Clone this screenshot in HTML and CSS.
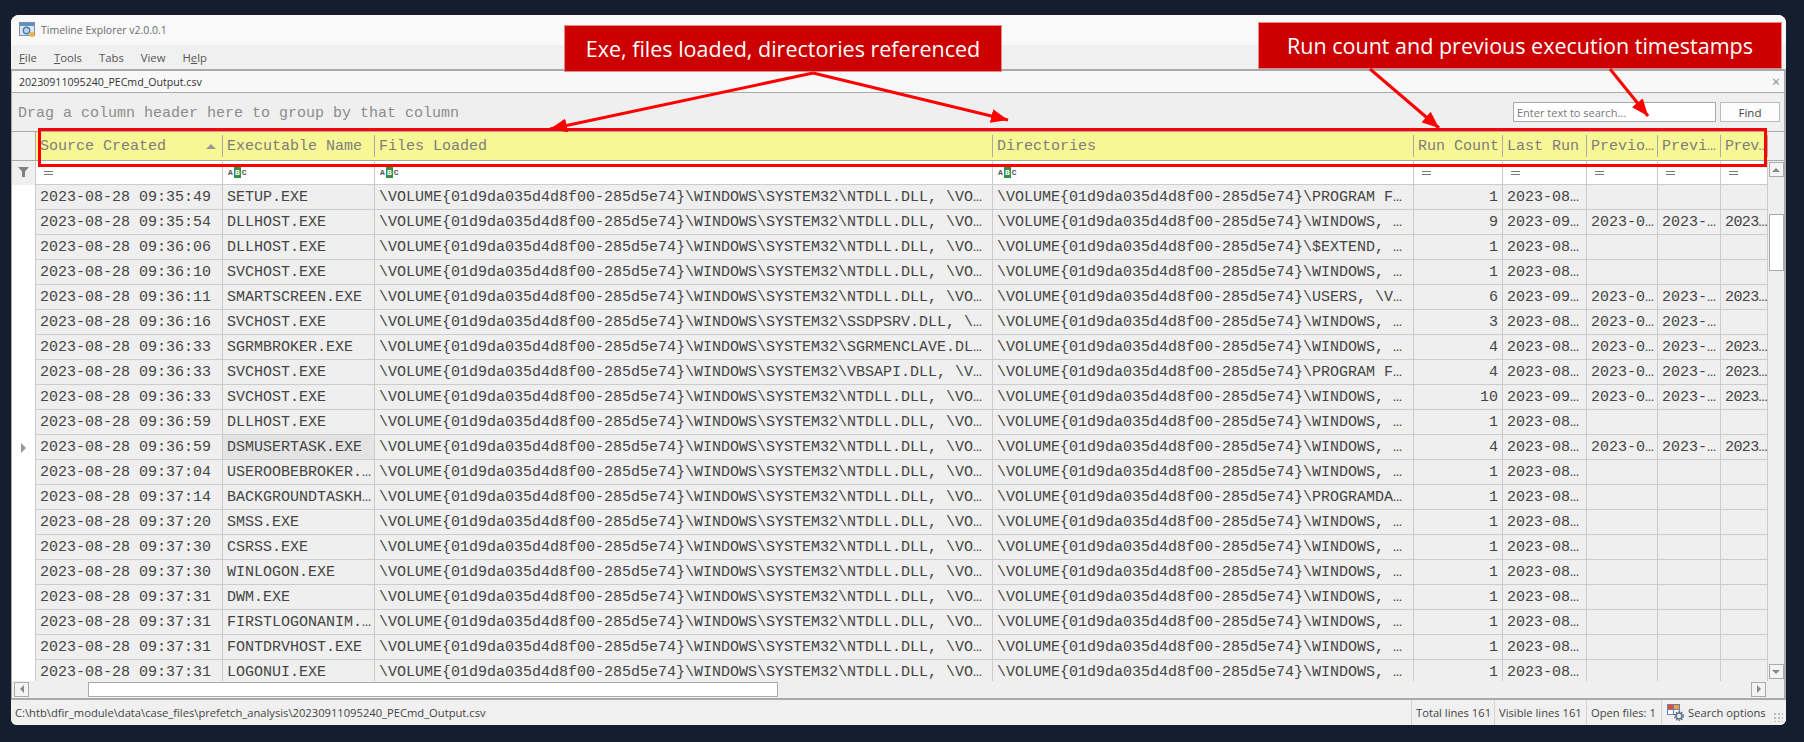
FILE: index.html
```html
<!DOCTYPE html>
<html lang="en">
<head>
    <meta charset="UTF-8">
    <title>Timeline Explorer v2.0.0.1</title>
    <link rel="stylesheet" href="styles.css">
</head>
<body>
    <div class="window">
        <div class="titlebar">
            <svg class="app-icon" width="17" height="16" viewBox="0 0 17 16">
                <rect x="0.5" y="0.5" width="15" height="13" fill="#dfe6ee" stroke="#7d8fa5"/>
                <rect x="1" y="1" width="14" height="3" fill="#5b93c7"/>
                <circle cx="7.5" cy="8.5" r="3.2" fill="#bcd6ee" stroke="#4d7ea8" stroke-width="1.4"/>
                <circle cx="13" cy="12.5" r="2.5" fill="#f2b33d"/>
            </svg>
            <span>Timeline Explorer v2.0.0.1</span>
        </div>
        <div class="menubar">
            <span><u>F</u>ile</span>
            <span><u>T</u>ools</span>
            <span>Tabs</span>
            <span>View</span>
            <span>H<u>e</u>lp</span>
        </div>
        <div class="workspace">
            <div class="tabbar">
                <span>20230911095240_PECmd_Output.csv</span>
                <span class="close">×</span>
            </div>
            <div class="groupbar">
                <span class="group-hint">Drag a column header here to group by that column</span>
                <input class="search" type="text" placeholder="Enter text to search...">
                <button class="find">Find</button>
            </div>
            <div class="row head">
                <div class="corner"></div>
                <div class="hcell sorted">Source Created<i class="sort"></i></div>
                <div class="hcell">Executable Name</div>
                <div class="hcell">Files Loaded</div>
                <div class="hcell">Directories</div>
                <div class="hcell">Run Count</div>
                <div class="hcell">Last Run</div>
                <div class="hcell">Previo…</div>
                <div class="hcell">Previ…</div>
                <div class="hcell">Prev…</div>
            </div>
            <div class="grid">
                <div class="rows">
                    <div class="row filter">
                        <div class="ind">
                            <svg width="11" height="10" viewBox="0 0 11 10"><path d="M0 0h11L7 4.5V10H4V4.5z" fill="#808080"/></svg>
                        </div>
                        <div class="fcell"><i class="eq"></i></div>
                        <div class="fcell"><span class="abc">A<b>B</b>C</span></div>
                        <div class="fcell"><span class="abc">A<b>B</b>C</span></div>
                        <div class="fcell"><span class="abc">A<b>B</b>C</span></div>
                        <div class="fcell"><i class="eq"></i></div>
                        <div class="fcell"><i class="eq"></i></div>
                        <div class="fcell"><i class="eq"></i></div>
                        <div class="fcell"><i class="eq"></i></div>
                        <div class="fcell"><i class="eq"></i></div>
                    </div>
                    <div class="data">
                        <div class="row"><div class="ind"></div><div class="cell">2023-08-28 09:35:49</div><div class="cell">SETUP.EXE</div><div class="cell">\VOLUME{01d9da035d4d8f00-285d5e74}\WINDOWS\SYSTEM32\NTDLL.DLL, \VO…</div><div class="cell">\VOLUME{01d9da035d4d8f00-285d5e74}\PROGRAM F…</div><div class="cell num">1</div><div class="cell">2023-08…</div><div class="cell"></div><div class="cell"></div><div class="cell"></div></div>
                        <div class="row"><div class="ind"></div><div class="cell">2023-08-28 09:35:54</div><div class="cell">DLLHOST.EXE</div><div class="cell">\VOLUME{01d9da035d4d8f00-285d5e74}\WINDOWS\SYSTEM32\NTDLL.DLL, \VO…</div><div class="cell">\VOLUME{01d9da035d4d8f00-285d5e74}\WINDOWS, …</div><div class="cell num">9</div><div class="cell">2023-09…</div><div class="cell">2023-0…</div><div class="cell">2023-…</div><div class="cell">2023…</div></div>
                        <div class="row"><div class="ind"></div><div class="cell">2023-08-28 09:36:06</div><div class="cell">DLLHOST.EXE</div><div class="cell">\VOLUME{01d9da035d4d8f00-285d5e74}\WINDOWS\SYSTEM32\NTDLL.DLL, \VO…</div><div class="cell">\VOLUME{01d9da035d4d8f00-285d5e74}\$EXTEND, …</div><div class="cell num">1</div><div class="cell">2023-08…</div><div class="cell"></div><div class="cell"></div><div class="cell"></div></div>
                        <div class="row"><div class="ind"></div><div class="cell">2023-08-28 09:36:10</div><div class="cell">SVCHOST.EXE</div><div class="cell">\VOLUME{01d9da035d4d8f00-285d5e74}\WINDOWS\SYSTEM32\NTDLL.DLL, \VO…</div><div class="cell">\VOLUME{01d9da035d4d8f00-285d5e74}\WINDOWS, …</div><div class="cell num">1</div><div class="cell">2023-08…</div><div class="cell"></div><div class="cell"></div><div class="cell"></div></div>
                        <div class="row"><div class="ind"></div><div class="cell">2023-08-28 09:36:11</div><div class="cell">SMARTSCREEN.EXE</div><div class="cell">\VOLUME{01d9da035d4d8f00-285d5e74}\WINDOWS\SYSTEM32\NTDLL.DLL, \VO…</div><div class="cell">\VOLUME{01d9da035d4d8f00-285d5e74}\USERS, \V…</div><div class="cell num">6</div><div class="cell">2023-09…</div><div class="cell">2023-0…</div><div class="cell">2023-…</div><div class="cell">2023…</div></div>
                        <div class="row"><div class="ind"></div><div class="cell">2023-08-28 09:36:16</div><div class="cell">SVCHOST.EXE</div><div class="cell">\VOLUME{01d9da035d4d8f00-285d5e74}\WINDOWS\SYSTEM32\SSDPSRV.DLL, \…</div><div class="cell">\VOLUME{01d9da035d4d8f00-285d5e74}\WINDOWS, …</div><div class="cell num">3</div><div class="cell">2023-08…</div><div class="cell">2023-0…</div><div class="cell">2023-…</div><div class="cell"></div></div>
                        <div class="row"><div class="ind"></div><div class="cell">2023-08-28 09:36:33</div><div class="cell">SGRMBROKER.EXE</div><div class="cell">\VOLUME{01d9da035d4d8f00-285d5e74}\WINDOWS\SYSTEM32\SGRMENCLAVE.DL…</div><div class="cell">\VOLUME{01d9da035d4d8f00-285d5e74}\WINDOWS, …</div><div class="cell num">4</div><div class="cell">2023-08…</div><div class="cell">2023-0…</div><div class="cell">2023-…</div><div class="cell">2023…</div></div>
                        <div class="row"><div class="ind"></div><div class="cell">2023-08-28 09:36:33</div><div class="cell">SVCHOST.EXE</div><div class="cell">\VOLUME{01d9da035d4d8f00-285d5e74}\WINDOWS\SYSTEM32\VBSAPI.DLL, \V…</div><div class="cell">\VOLUME{01d9da035d4d8f00-285d5e74}\PROGRAM F…</div><div class="cell num">4</div><div class="cell">2023-08…</div><div class="cell">2023-0…</div><div class="cell">2023-…</div><div class="cell">2023…</div></div>
                        <div class="row"><div class="ind"></div><div class="cell">2023-08-28 09:36:33</div><div class="cell">SVCHOST.EXE</div><div class="cell">\VOLUME{01d9da035d4d8f00-285d5e74}\WINDOWS\SYSTEM32\NTDLL.DLL, \VO…</div><div class="cell">\VOLUME{01d9da035d4d8f00-285d5e74}\WINDOWS, …</div><div class="cell num">10</div><div class="cell">2023-09…</div><div class="cell">2023-0…</div><div class="cell">2023-…</div><div class="cell">2023…</div></div>
                        <div class="row"><div class="ind"></div><div class="cell">2023-08-28 09:36:59</div><div class="cell">DLLHOST.EXE</div><div class="cell">\VOLUME{01d9da035d4d8f00-285d5e74}\WINDOWS\SYSTEM32\NTDLL.DLL, \VO…</div><div class="cell">\VOLUME{01d9da035d4d8f00-285d5e74}\WINDOWS, …</div><div class="cell num">1</div><div class="cell">2023-08…</div><div class="cell"></div><div class="cell"></div><div class="cell"></div></div>
                        <div class="row"><div class="ind"><i class="current"></i></div><div class="cell">2023-08-28 09:36:59</div><div class="cell focused">DSMUSERTASK.EXE</div><div class="cell">\VOLUME{01d9da035d4d8f00-285d5e74}\WINDOWS\SYSTEM32\NTDLL.DLL, \VO…</div><div class="cell">\VOLUME{01d9da035d4d8f00-285d5e74}\WINDOWS, …</div><div class="cell num">4</div><div class="cell">2023-08…</div><div class="cell">2023-0…</div><div class="cell">2023-…</div><div class="cell">2023…</div></div>
                        <div class="row"><div class="ind"></div><div class="cell">2023-08-28 09:37:04</div><div class="cell">USEROOBEBROKER.…</div><div class="cell">\VOLUME{01d9da035d4d8f00-285d5e74}\WINDOWS\SYSTEM32\NTDLL.DLL, \VO…</div><div class="cell">\VOLUME{01d9da035d4d8f00-285d5e74}\WINDOWS, …</div><div class="cell num">1</div><div class="cell">2023-08…</div><div class="cell"></div><div class="cell"></div><div class="cell"></div></div>
                        <div class="row"><div class="ind"></div><div class="cell">2023-08-28 09:37:14</div><div class="cell">BACKGROUNDTASKH…</div><div class="cell">\VOLUME{01d9da035d4d8f00-285d5e74}\WINDOWS\SYSTEM32\NTDLL.DLL, \VO…</div><div class="cell">\VOLUME{01d9da035d4d8f00-285d5e74}\PROGRAMDA…</div><div class="cell num">1</div><div class="cell">2023-08…</div><div class="cell"></div><div class="cell"></div><div class="cell"></div></div>
                        <div class="row"><div class="ind"></div><div class="cell">2023-08-28 09:37:20</div><div class="cell">SMSS.EXE</div><div class="cell">\VOLUME{01d9da035d4d8f00-285d5e74}\WINDOWS\SYSTEM32\NTDLL.DLL, \VO…</div><div class="cell">\VOLUME{01d9da035d4d8f00-285d5e74}\WINDOWS, …</div><div class="cell num">1</div><div class="cell">2023-08…</div><div class="cell"></div><div class="cell"></div><div class="cell"></div></div>
                        <div class="row"><div class="ind"></div><div class="cell">2023-08-28 09:37:30</div><div class="cell">CSRSS.EXE</div><div class="cell">\VOLUME{01d9da035d4d8f00-285d5e74}\WINDOWS\SYSTEM32\NTDLL.DLL, \VO…</div><div class="cell">\VOLUME{01d9da035d4d8f00-285d5e74}\WINDOWS, …</div><div class="cell num">1</div><div class="cell">2023-08…</div><div class="cell"></div><div class="cell"></div><div class="cell"></div></div>
                        <div class="row"><div class="ind"></div><div class="cell">2023-08-28 09:37:30</div><div class="cell">WINLOGON.EXE</div><div class="cell">\VOLUME{01d9da035d4d8f00-285d5e74}\WINDOWS\SYSTEM32\NTDLL.DLL, \VO…</div><div class="cell">\VOLUME{01d9da035d4d8f00-285d5e74}\WINDOWS, …</div><div class="cell num">1</div><div class="cell">2023-08…</div><div class="cell"></div><div class="cell"></div><div class="cell"></div></div>
                        <div class="row"><div class="ind"></div><div class="cell">2023-08-28 09:37:31</div><div class="cell">DWM.EXE</div><div class="cell">\VOLUME{01d9da035d4d8f00-285d5e74}\WINDOWS\SYSTEM32\NTDLL.DLL, \VO…</div><div class="cell">\VOLUME{01d9da035d4d8f00-285d5e74}\WINDOWS, …</div><div class="cell num">1</div><div class="cell">2023-08…</div><div class="cell"></div><div class="cell"></div><div class="cell"></div></div>
                        <div class="row"><div class="ind"></div><div class="cell">2023-08-28 09:37:31</div><div class="cell">FIRSTLOGONANIM.…</div><div class="cell">\VOLUME{01d9da035d4d8f00-285d5e74}\WINDOWS\SYSTEM32\NTDLL.DLL, \VO…</div><div class="cell">\VOLUME{01d9da035d4d8f00-285d5e74}\WINDOWS, …</div><div class="cell num">1</div><div class="cell">2023-08…</div><div class="cell"></div><div class="cell"></div><div class="cell"></div></div>
                        <div class="row"><div class="ind"></div><div class="cell">2023-08-28 09:37:31</div><div class="cell">FONTDRVHOST.EXE</div><div class="cell">\VOLUME{01d9da035d4d8f00-285d5e74}\WINDOWS\SYSTEM32\NTDLL.DLL, \VO…</div><div class="cell">\VOLUME{01d9da035d4d8f00-285d5e74}\WINDOWS, …</div><div class="cell num">1</div><div class="cell">2023-08…</div><div class="cell"></div><div class="cell"></div><div class="cell"></div></div>
                        <div class="row"><div class="ind"></div><div class="cell">2023-08-28 09:37:31</div><div class="cell">LOGONUI.EXE</div><div class="cell">\VOLUME{01d9da035d4d8f00-285d5e74}\WINDOWS\SYSTEM32\NTDLL.DLL, \VO…</div><div class="cell">\VOLUME{01d9da035d4d8f00-285d5e74}\WINDOWS, …</div><div class="cell num">1</div><div class="cell">2023-08…</div><div class="cell"></div><div class="cell"></div><div class="cell"></div></div>
                    </div>
                </div>
                <div class="vscroll">
                    <div class="sbtn"><i class="tri up"></i></div>
                    <div class="vthumb"></div>
                    <div class="sbtn down"><i class="tri dn"></i></div>
                </div>
            </div>
            <div class="hscroll">
                <div class="sbtn"><i class="tri lf"></i></div>
                <div class="hthumb"></div>
                <div class="sbtn right"><i class="tri rt"></i></div>
            </div>
        </div>
        <div class="statusbar">
            <span class="path">C:\htb\dfir_module\data\case_files\prefetch_analysis\20230911095240_PECmd_Output.csv</span>
            <span class="stat total">Total lines 161</span>
            <span class="stat visible">Visible lines 161</span>
            <span class="stat files">Open files: 1</span>
            <span class="stat options">
                <svg width="17" height="17" viewBox="0 0 17 17">
                    <rect x="0.5" y="0.5" width="12" height="10" fill="#fff" stroke="#6d7fa8"/>
                    <rect x="1" y="1" width="5" height="4" fill="#e8493a"/>
                    <rect x="7" y="1" width="5" height="4" fill="#f0a33c"/>
                    <path d="M0.5 5.5h12M6.5 0.5v10" stroke="#6d7fa8" fill="none"/>
                    <circle cx="12" cy="12" r="3" fill="#e6e9ee" stroke="#5f6f85" stroke-width="1.6"/>
                    <circle cx="12" cy="12" r="4.4" fill="none" stroke="#5f6f85" stroke-width="1.2" stroke-dasharray="1.4 1.4"/>
                </svg>
                Search options
            </span>
            <i class="grip"></i>
        </div>
    </div>

    <!-- annotations drawn on top of the screenshot -->
    <div class="callout callout-exe">Exe, files loaded, directories referenced</div>
    <div class="callout callout-run">Run count and previous execution timestamps</div>
    <div class="redbox"></div>
    <svg class="arrows" width="1804" height="742" viewBox="0 0 1804 742">
        <defs>
            <marker id="head" markerUnits="userSpaceOnUse" markerWidth="18" markerHeight="14" refX="17" refY="7" orient="auto">
                <path d="M0 0L17 7L0 14z" fill="#ff0000"/>
            </marker>
        </defs>
        <path class="arrow" d="M813 73L550 129" marker-end="url(#head)"/>
        <path class="arrow" d="M813 73L1008 120" marker-end="url(#head)"/>
        <path class="arrow" d="M1370 69L1439 128" marker-end="url(#head)"/>
        <path class="arrow" d="M1610 69L1648 116" marker-end="url(#head)"/>
    </svg>
</body>
</html>
```

FILE: styles.css
```css
html, body {
    margin: 0;
    height: 100%;
}

body {
    background: #141e2e;
    width: 1804px;
    height: 742px;
    padding: 15px 18px 17px 11px;
    box-sizing: border-box;
    position: relative;
    overflow: hidden;
    font-family: "Open Sans", "Noto Sans", sans-serif;
    font-size: 12px;
    color: #444;
    --cols: 24px 187px 152px 618px 421px 89px 84px 71px 63px 47px;
}

.window {
    height: 710px;
    display: flex;
    flex-direction: column;
    background: #f0f0f0;
    border-radius: 8px 8px 6px 6px;
    overflow: hidden;
}

.titlebar {
    height: 30px;
    flex: none;
    display: flex;
    align-items: center;
    gap: 5px;
    padding-left: 8px;
    background: #f9f9f9;
    color: #6a6a6a;
    font-size: 10.5px;
}

.menubar {
    height: 24px;
    flex: none;
    display: flex;
    align-items: center;
    gap: 17px;
    padding-left: 8px;
    color: #555;
    font-size: 11.3px;
}

.workspace {
    flex: 1;
    min-height: 0;
    display: flex;
    flex-direction: column;
    border: 2px solid #aaa;
    border-left-width: 1px;
}

.tabbar {
    height: 21px;
    flex: none;
    display: flex;
    justify-content: space-between;
    align-items: center;
    padding: 0 4px 0 7px;
    background: #f8f8f8;
    border-bottom: 1px solid #aaa;
    color: #333;
    font-size: 10.6px;
}

.close {
    color: #888;
    font-size: 14px;
}

.groupbar {
    height: 38px;
    flex: none;
    display: flex;
    align-items: center;
    padding-left: 6px;
    background: #efefef;
    box-sizing: border-box;
}

.group-hint {
    flex: 1;
    padding-top: 2px;
    font-family: "Liberation Mono", monospace;
    font-size: 15px;
    color: #8c8c8c;
}

.search {
    width: 203px;
    height: 20px;
    box-sizing: border-box;
    border: 1px solid #aaa;
    background: #fff;
    padding: 0 3px;
    margin: 0 4px 0 0;
    font-family: inherit;
    font-size: 11px;
}

.search::placeholder {
    color: #777;
}

.find {
    width: 60px;
    height: 20px;
    box-sizing: border-box;
    border: 1px solid #bbb;
    background: #fcfcfc;
    padding: 0;
    margin-right: 4px;
    font-family: inherit;
    font-size: 11.5px;
    color: #444;
}

/* table rows share one column template */
.row {
    display: grid;
    grid-template-columns: var(--cols);
    font-family: "Liberation Mono", monospace;
    font-size: 15px;
}

/* narrowest column, the text only just fits */
.row > .cell:last-child,
.row > .hcell:last-child {
    letter-spacing: -0.6px;
}

.head {
    height: 30px;
    flex: none;
    box-sizing: border-box;
    border-top: 1px solid #aaa;
    border-bottom: 1px solid #aaa;
    background: #f0f0f0;
    padding-right: 16px;
    position: relative;
}

.corner {
    border-right: 1px solid #aaa;
}

.hcell {
    position: relative;
    display: flex;
    align-items: center;
    padding-left: 4px;
    background: #f8f796;
    color: #7d7d7d;
    white-space: nowrap;
    overflow: hidden;
}

.hcell::after {
    content: "";
    position: absolute;
    right: 0;
    top: 3px;
    bottom: 3px;
    width: 1px;
    background: #aaa;
}

.sort {
    position: absolute;
    right: 7px;
    top: 12px;
    border-left: 5px solid transparent;
    border-right: 5px solid transparent;
    border-bottom: 5px solid #999;
}

.grid {
    flex: 1;
    min-height: 0;
    display: flex;
    background: #efefef;
}

.rows {
    width: 1756px;
    flex: none;
    display: flex;
    flex-direction: column;
    min-height: 0;
}

.filter {
    height: 24px;
    flex: none;
    background: #fff;
}

.ind {
    display: flex;
    align-items: center;
    justify-content: center;
    background: #fff;
    border-right: 1px solid #ccc;
}

.filter .ind {
    background: #f0f0f0;
    padding-bottom: 2px;
}

.fcell {
    display: flex;
    align-items: center;
    padding-left: 8px;
    box-sizing: border-box;
    border-right: 1px solid #ccc;
    border-bottom: 1px solid #ccc;
    height: 24px;
}

.eq {
    width: 9px;
    height: 2px;
    border-top: 1px solid #777;
    border-bottom: 1px solid #777;
}

.abc {
    display: flex;
    align-items: center;
    font-family: "Liberation Mono", monospace;
    font-size: 8px;
    font-weight: bold;
    color: #555;
    gap: 1px;
    margin-left: -3px;
}

.abc b {
    width: 7px;
    height: 11px;
    display: flex;
    align-items: center;
    justify-content: center;
    background: #2f9148;
    color: #fff;
}

.data {
    flex: 1;
    min-height: 0;
    overflow: hidden;
}

.data .row {
    height: 25px;
}

.cell {
    box-sizing: border-box;
    height: 25px;
    line-height: 23px;
    padding: 1px 0 0 4px;
    border-right: 1px solid #ccc;
    border-bottom: 1px solid #ccc;
    color: #444;
    white-space: nowrap;
    overflow: hidden;
}

.num {
    text-align: right;
    padding: 1px 4px 0 0;
}

.focused {
    background: #e4e4e4;
}

.current {
    border-left: 5px solid #999;
    border-top: 5px solid transparent;
    border-bottom: 5px solid transparent;
}

.vscroll {
    width: 16px;
    flex: none;
    display: flex;
    flex-direction: column;
    align-items: center;
}

.sbtn {
    width: 15px;
    height: 15px;
    flex: none;
    box-sizing: border-box;
    border: 1px solid #aaa;
    background: #f4f4f4;
    display: flex;
    align-items: center;
    justify-content: center;
}

.vscroll .sbtn:first-child {
    margin-top: 1px;
}

.vscroll .down {
    margin-top: auto;
    margin-bottom: 2px;
}

.vthumb {
    width: 15px;
    height: 57px;
    margin-top: 37px;
    box-sizing: border-box;
    border: 1px solid #aaa;
    background: #fff;
}

.tri {
    width: 0;
    height: 0;
}

.up {
    border-left: 4px solid transparent;
    border-right: 4px solid transparent;
    border-bottom: 4px solid #888;
}

.dn {
    border-left: 4px solid transparent;
    border-right: 4px solid transparent;
    border-top: 4px solid #888;
}

.lf {
    border-top: 4px solid transparent;
    border-bottom: 4px solid transparent;
    border-right: 4px solid #888;
}

.rt {
    border-top: 4px solid transparent;
    border-bottom: 4px solid transparent;
    border-left: 4px solid #888;
}

.hscroll {
    height: 17px;
    flex: none;
    display: flex;
    align-items: center;
    padding: 0 18px 1px 2px;
    box-sizing: border-box;
    background: #efefef;
}

.hthumb {
    width: 690px;
    height: 15px;
    margin-left: 59px;
    box-sizing: border-box;
    border: 1px solid #aaa;
    background: #fff;
}

.hscroll .right {
    margin-left: auto;
}

.statusbar {
    height: 25px;
    flex: none;
    display: flex;
    align-items: center;
    background: #f0f0f0;
    color: #444;
    font-size: 11.2px;
    padding-left: 4px;
    position: relative;
}

.path {
    width: 1396px;
    white-space: nowrap;
}

.stat {
    height: 100%;
    box-sizing: border-box;
    display: flex;
    align-items: center;
    gap: 4px;
    padding-left: 4px;
    border-left: 1px solid #d4d4d4;
    white-space: nowrap;
}

.total { width: 83px; }
.visible { width: 92px; }
.files { width: 75px; }
.options { padding-left: 5px; }

.grip {
    position: absolute;
    right: 3px;
    bottom: 3px;
    width: 10px;
    height: 10px;
    background: radial-gradient(circle, #bbb 1px, transparent 1.2px) 0 0 / 4px 4px;
}

/* annotations */
.callout {
    position: absolute;
    box-sizing: border-box;
    display: flex;
    align-items: center;
    justify-content: center;
    background: #cc0000;
    border: 1px solid #e08a8a;
    color: #fff;
    font-family: "Open Sans", "Noto Sans", sans-serif;
    font-size: 21.5px;
    white-space: nowrap;
}

.callout-exe {
    left: 564px;
    top: 25px;
    width: 438px;
    height: 47px;
}

.callout-run {
    left: 1258px;
    top: 22px;
    width: 524px;
    height: 47px;
}

.redbox {
    position: absolute;
    left: 38px;
    top: 128px;
    width: 1729px;
    height: 39px;
    box-sizing: border-box;
    border: 3px solid #ff0000;
}

.arrows {
    position: absolute;
    left: 0;
    top: 0;
    pointer-events: none;
}

.arrow {
    fill: none;
    stroke: #ff0000;
    stroke-width: 3;
}
```
